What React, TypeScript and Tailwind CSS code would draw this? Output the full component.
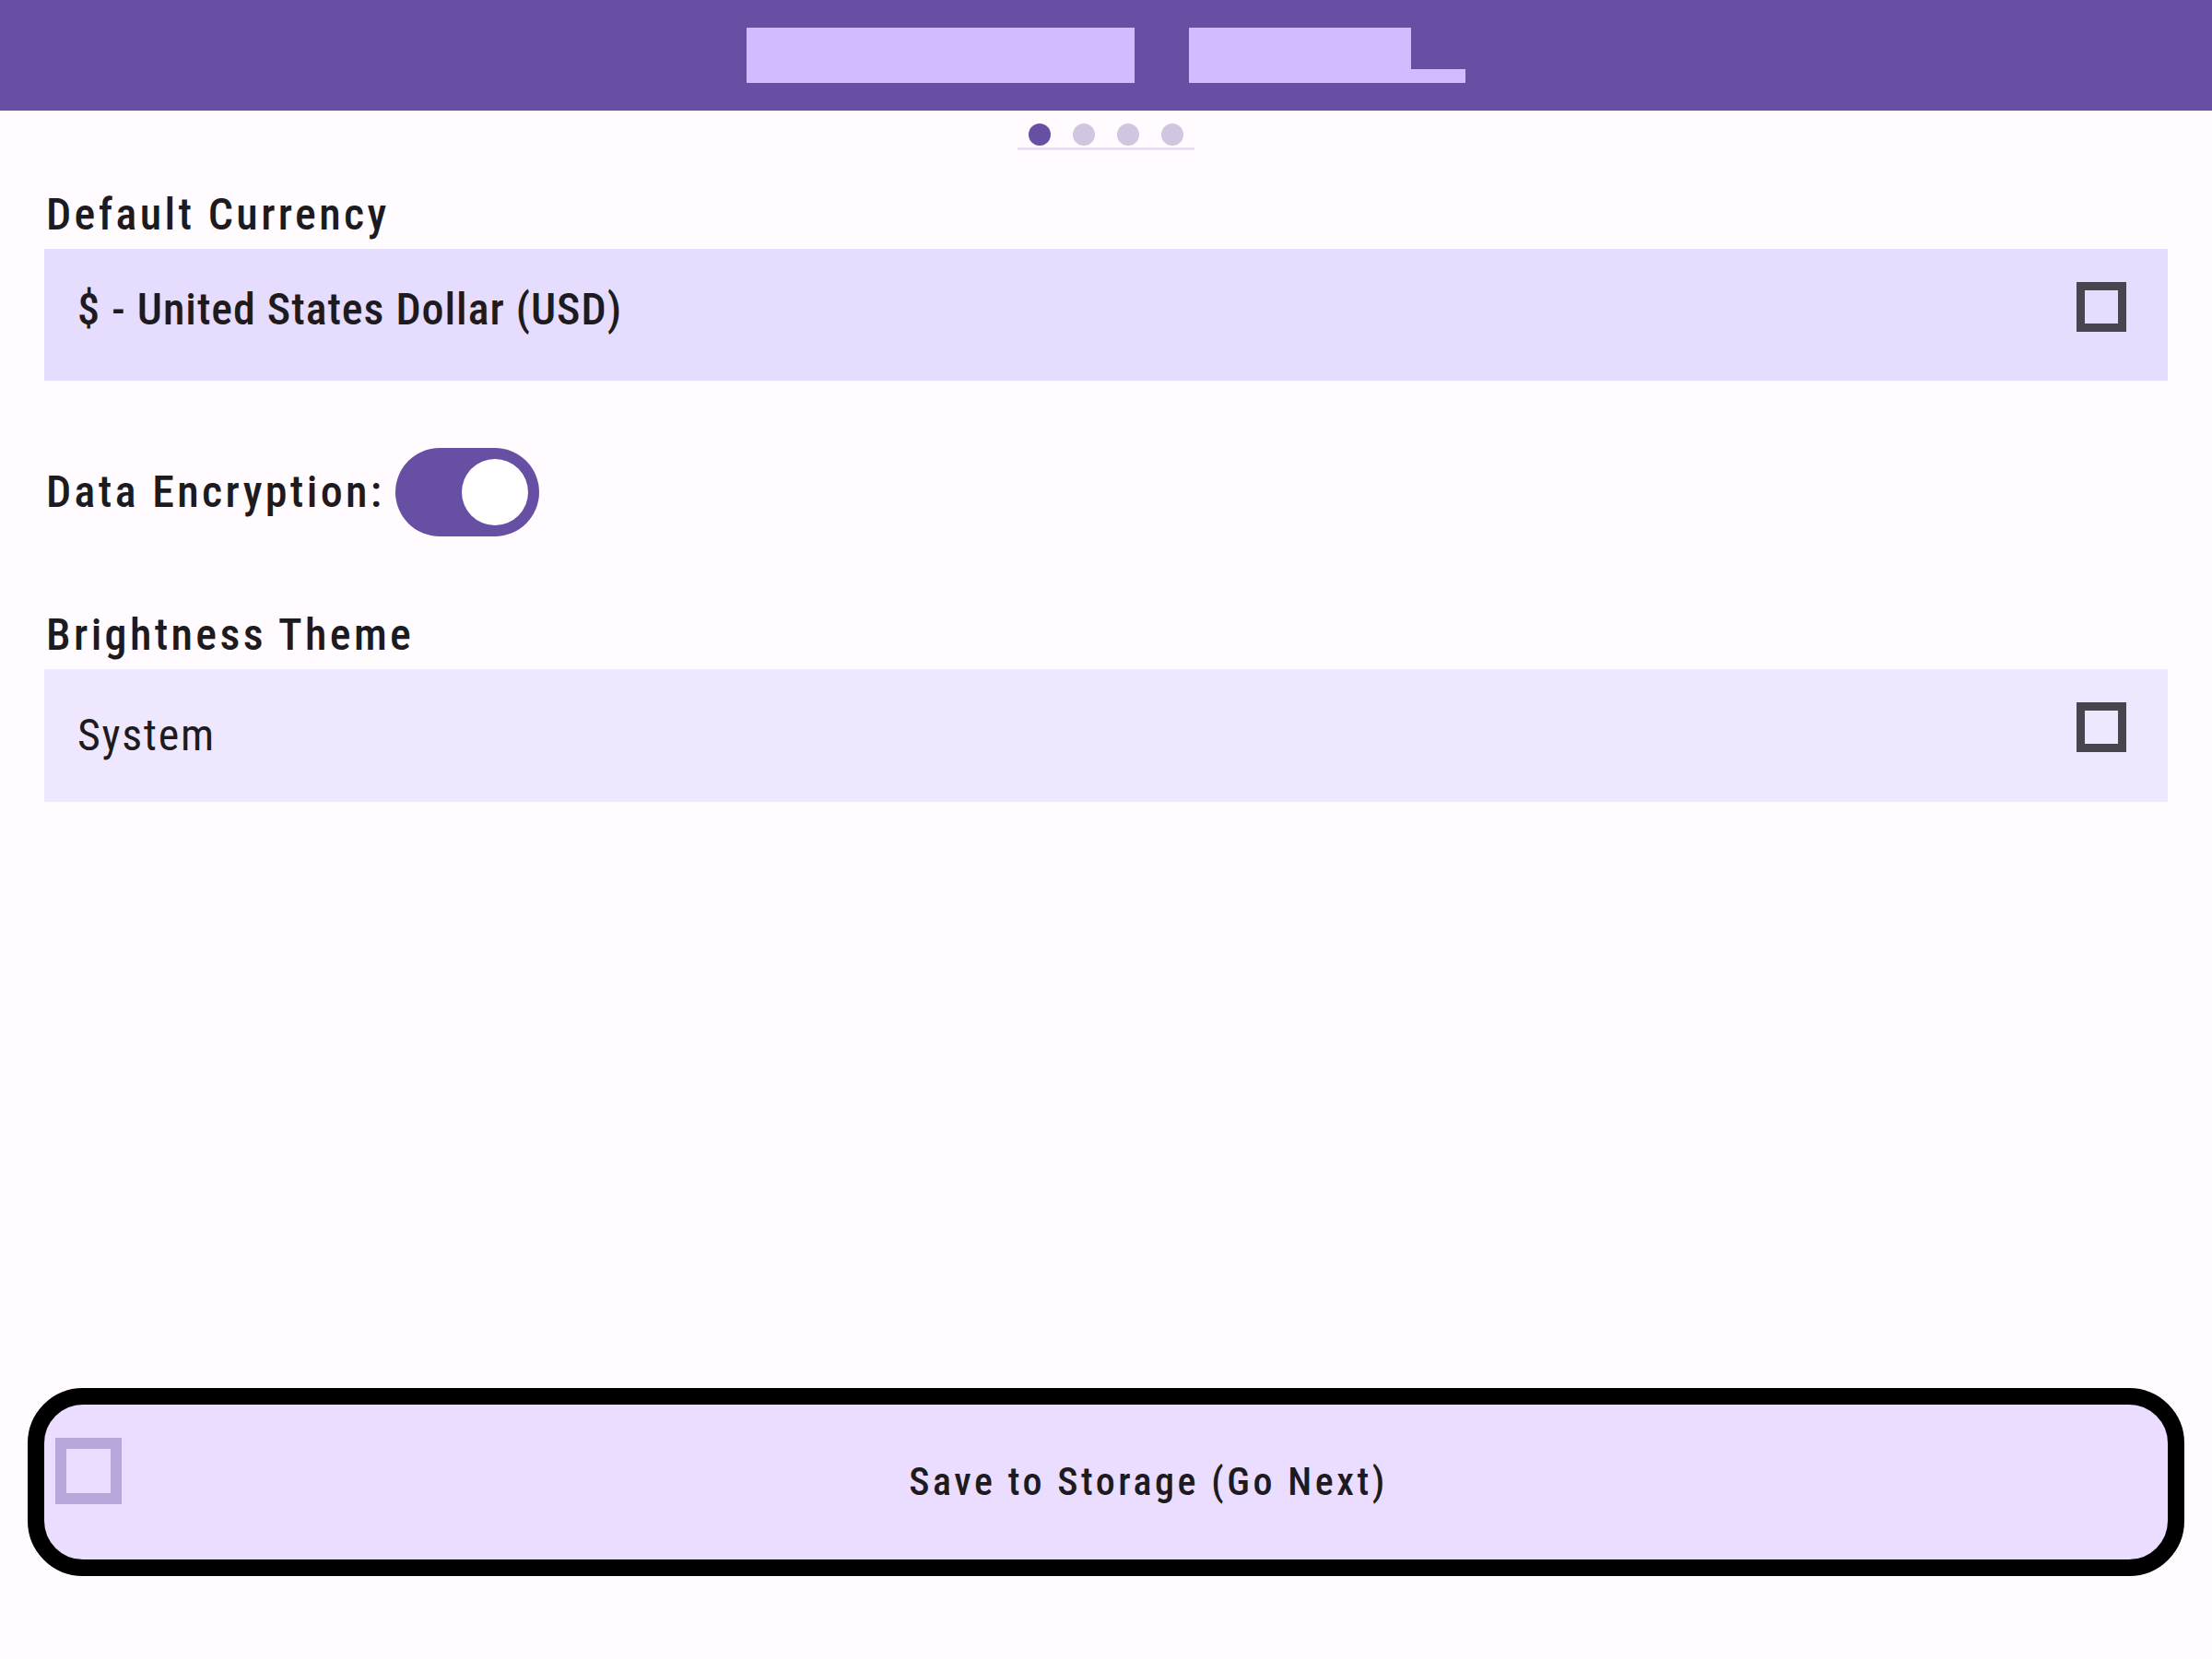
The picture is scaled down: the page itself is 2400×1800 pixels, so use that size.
import { useState } from "react";

const font = { fontFamily: "Roboto, 'Noto Sans', sans-serif" };

function Box({ className }: { className: string }) {
  return <div className={"shrink-0 " + className} />;
}

function App() {
  const [encrypt, setEncrypt] = useState(true);
  const dots = [0, 1, 2, 3];

  return (
    <div
      className="min-h-[1800px] w-[2400px] bg-[#fffbfe] text-[#1d1b20] flex flex-col [font-stretch:75%]"
      style={font}
    >
      {/* top bar */}
      <div className="h-[120px] bg-[#6750a4] flex justify-center items-end pb-[30px]">
        <Box className="w-[421px] h-[60px] bg-[#d2bcff]" />
        <Box className="w-[59px] h-[60px]" />
        <Box className="w-[241px] h-[60px] bg-[#d2bcff]" />
        <Box className="w-[59px] h-[15px] bg-[#d2bcff]" />
      </div>

      {/* page dots */}
      <div className="flex flex-col items-center mt-[14px]">
        <div className="flex gap-[24px]">
          {dots.map((d) => (
            <div
              key={d}
              className={
                d === 0
                  ? "w-[24px] h-[24px] rounded-full bg-[#6750a4]"
                  : "w-[24px] h-[24px] rounded-full bg-[#d0c6e2]"
              }
            />
          ))}
        </div>
        <div className="w-[192px] h-[3px] mt-[2px] bg-[#e8e0ee]" />
      </div>

      {/* currency */}
      <div className="mt-[46px] px-[50px] text-[48px] leading-[48px] font-medium tracking-[0.07em]">
        Default Currency
      </div>
      <div className="mx-[48px] mt-[13px] h-[143px] bg-[#e6dcfe] flex items-start justify-between pt-[36px] pl-[36px] pr-[45px]">
        <div className="mt-[6px] text-[48px] leading-[48px] font-medium tracking-[0.02em]">
          $ - United States Dollar (USD)
        </div>
        <div className="w-[54px] h-[54px] border-[9px] border-[#49454f]" />
      </div>

      {/* encryption */}
      <div className="mt-[73px] px-[50px] flex items-center gap-[12px]">
        <div className="text-[48px] leading-[48px] font-medium tracking-[0.07em]">
          Data Encryption:
        </div>
        <button
          onClick={() => setEncrypt(!encrypt)}
          className={
            encrypt
              ? "w-[156px] h-[96px] rounded-full bg-[#6750a4] flex items-center justify-end pr-[12px]"
              : "w-[156px] h-[96px] rounded-full bg-[#e7e0ec] flex items-center justify-start pl-[12px]"
          }
        >
          <div className="w-[72px] h-[72px] rounded-full bg-white" />
        </button>
      </div>

      {/* theme */}
      <div className="mt-[83px] px-[50px] text-[48px] leading-[48px] font-medium tracking-[0.07em]">
        Brightness Theme
      </div>
      <div className="mx-[48px] mt-[13px] h-[144px] bg-[#efe7fd] flex items-start justify-between pt-[36px] pl-[36px] pr-[45px]">
        <div className="mt-[12px] text-[48px] leading-[48px] tracking-[0.035em]">
          System
        </div>
        <div className="w-[54px] h-[54px] border-[9px] border-[#49454f]" />
      </div>

      {/* save */}
      <div className="mt-auto mb-[90px] mx-[30px]">
        <button className="relative w-full h-[204px] rounded-[60px] border-[18px] border-black bg-[#eaddff] flex items-center justify-center pl-[92px]">
          <div className="absolute left-[12px] top-[36px] w-[72px] h-[72px] border-[12px] border-[#b8a7db]" />
          <span className="text-[42px] leading-[48px] font-medium tracking-[0.085em] [font-stretch:75%]" style={font}>
            Save to Storage (Go Next)
          </span>
        </button>
      </div>
    </div>
  );
}

export default App;
